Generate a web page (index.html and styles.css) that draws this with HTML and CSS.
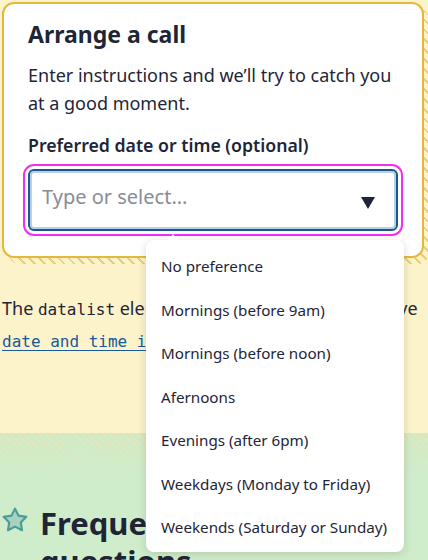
FILE: index.html
```html
<!DOCTYPE html>
<html lang="en">
<head>
<meta charset="utf-8">
<title>Arrange a call</title>
<link rel="stylesheet" href="styles.css">
</head>
<body>
<section class="top">
  <div class="card">
    <h2 class="card-title">Arrange a call</h2>
    <p class="card-text">Enter instructions and we’ll try to catch you at a good moment.</p>
    <label class="field-label" for="when">Preferred date or time (optional)</label>
    <div class="field">
      <input id="when" class="field-input" type="text" placeholder="Type or select...">
      <span class="field-arrow"></span>
    </div>
  </div>
  <p class="note">The <code>datalist</code> element is one alternative to native<br><a href="#">date and time inputs</a>.</p>
</section>
<section class="faq">
  <h2 class="faq-title">
    <svg class="star" viewBox="0 0 24 24" width="26" height="26" aria-hidden="true"><path d="M12 1.5L15.29 7.97 22.46 9.1 17.33 14.23 18.47 21.4 12 18.1 5.53 21.4 6.67 14.23 1.54 9.1 8.71 7.97Z" fill="#a9d1c2" stroke="#4b9d97" stroke-width="2" stroke-linejoin="round"/></svg>
    <span>Frequently asked questions</span>
  </h2>
</section>
<ul class="dropdown">
  <li>No preference</li>
  <li>Mornings (before 9am)</li>
  <li>Mornings (before noon)</li>
  <li>Afernoons</li>
  <li>Evenings (after 6pm)</li>
  <li>Weekdays (Monday to Friday)</li>
  <li>Weekends (Saturday or Sunday)</li>
</ul>
</body>
</html>
```
FILE: styles.css
```css
html, body {
  margin: 0;
  padding: 0;
}
body {
  width: 428px;
  height: 560px;
  overflow: hidden;
  position: relative;
  background: #fcf3cb;
  color: #1e2537;
  font-family: "Noto Sans", "Open Sans", sans-serif;
}
.top {
  position: relative;
  z-index: 0;
  padding: 2px 0 0 2px;
  height: 431px;
}
.card {
  position: relative;
  box-sizing: border-box;
  width: 422px;
  height: 256px;
  border: 2px solid #e3b83c;
  border-radius: 12px;
  background: #fff;
  padding: 15px 24px 0 24px;
}
.card::before {
  content: "";
  position: absolute;
  left: 4px;
  top: 4px;
  right: -7px;
  bottom: -8px;
  border-radius: 12px;
  z-index: -1;
  background: repeating-linear-gradient(45deg, transparent 0 4px, #e8cf7e 4px 6px, transparent 6px 7px);
}
.card-title {
  margin: 0;
  font-family: "Noto Sans", sans-serif;
  font-weight: 700;
  font-size: 23px;
  line-height: 30px;
}
.card-text {
  margin: 12px 0 0;
  font-size: 18px;
  line-height: 28px;
}
.field-label {
  display: block;
  margin-top: 16px;
  font-size: 17.7px;
  font-weight: 600;
  line-height: 24px;
}
.field {
  position: relative;
  margin-top: 12px;
  width: 370px;
  height: 62px;
  box-sizing: border-box;
  border: 2px solid #1d5590;
  border-radius: 6px;
  box-shadow: inset 0 0 0 2px #b7d0e8;
  outline: 2px solid #f22ef0;
  outline-offset: 3px;
  background: #fff;
}
.field-input {
  box-sizing: border-box;
  width: 100%;
  height: 100%;
  border: 0;
  background: transparent;
  padding: 0 0 7px 12px;
  font-family: "Noto Sans", sans-serif;
  font-size: 20px;
  color: #1e2537;
  outline: none;
}
.field-input::placeholder {
  color: #878d97;
}
.field-arrow {
  position: absolute;
  right: 21px;
  top: 26px;
  width: 0;
  height: 0;
  border-left: 7px solid transparent;
  border-right: 7px solid transparent;
  border-top: 12px solid #1e2537;
}
.note {
  margin: 35px 0 0;
  font-size: 18px;
  line-height: 30px;
  white-space: nowrap;
}
.note code {
  font-family: "DejaVu Sans Mono", monospace;
  font-size: 16px;
}
.note a {
  font-family: "DejaVu Sans Mono", monospace;
  font-size: 16px;
  color: #17599a;
  text-decoration: underline;
  text-underline-offset: 3px;
}
.faq {
  height: 127px;
  background:
    linear-gradient(to bottom, rgba(207, 237, 203, 0) 0, #cfedcb 42px),
    repeating-linear-gradient(45deg, #cfedcb 0 3px, #e3e2b4 3px 5px);
  padding: 71px 0 0 2px;
  box-sizing: border-box;
}
.faq-title {
  margin: 0;
  display: flex;
  align-items: flex-start;
  gap: 12px;
  font-family: "Noto Sans", sans-serif;
  font-weight: 700;
  font-size: 31px;
  line-height: 38px;
}
.star {
  flex: none;
  margin-top: 3px;
}
.dropdown {
  position: absolute;
  left: 146px;
  top: 240px;
  width: 258px;
  height: 312px;
  box-sizing: border-box;
  margin: 0;
  padding: 5px 0 0;
  list-style: none;
  background: #fff;
  border-radius: 8px;
  box-shadow: 0 2px 8px rgba(60, 50, 20, 0.18);
  z-index: 5;
}
.dropdown::before {
  content: "";
  position: absolute;
  left: 22px;
  top: -6px;
  border-left: 5px solid transparent;
  border-right: 5px solid transparent;
  border-bottom: 6px solid #fff;
}
.dropdown li {
  padding: 11px 15px;
  font-size: 15.2px;
  line-height: 21.5px;
  color: #1e2537;
}
```
